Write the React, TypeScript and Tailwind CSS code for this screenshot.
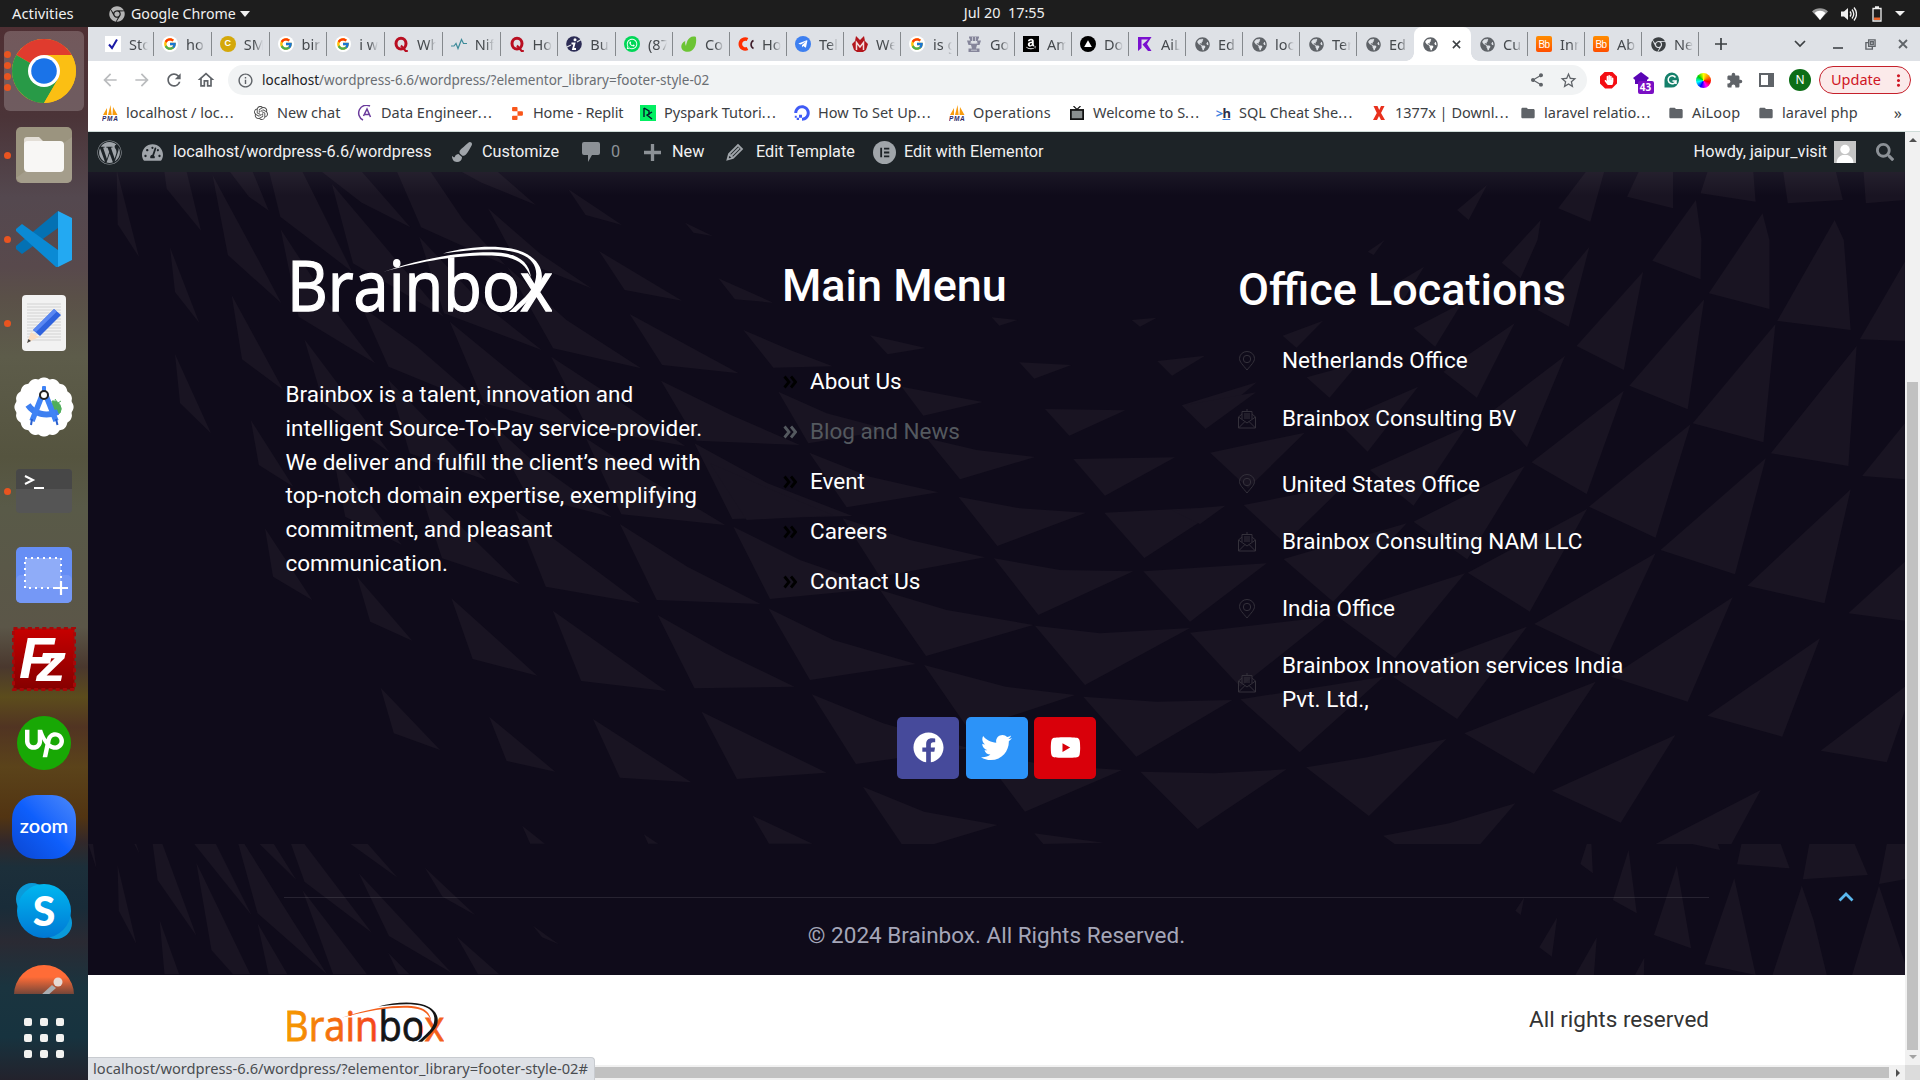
import React from "react";
import {
  FaAmazon,
  FaChrome,
  FaDigitalOcean,
  FaFacebook,
  FaGlobeAmericas,
  FaHandPaper,
  FaPaintBrush,
  FaSearch,
  FaTachometerAlt,
  FaTelegramPlane,
  FaTwitter,
  FaWhatsapp,
  FaWordpress,
  FaYoutube,
} from "react-icons/fa";
import { FcGoogle } from "react-icons/fc";
import {
  MdArrowBack,
  MdArrowForward,
  MdExtension,
  MdFolder,
  MdInfoOutline,
  MdMoreVert,
  MdOutlineHome,
  MdRefresh,
  MdShare,
  MdStarBorder,
} from "react-icons/md";
import { SiOpenai, SiReplit, SiUpwork } from "react-icons/si";

const UI = "font-['Noto_Sans',sans-serif]";

/* ---------- favicons ---------- */

function Google() {
  return (
    <span className="flex size-4 items-center justify-center rounded-full bg-white">
      <FcGoogle size={14} />
    </span>
  );
}
function Quora() {
  return (
    <svg viewBox="0 0 16 16" className="size-4">
      <ellipse cx="8" cy="7.600" rx="5" ry="5.400" fill="none" stroke="#b90f22" strokeWidth="3" />
      <path d="M8 9.500l4.600 5.500h2.200" fill="none" stroke="#b90f22" strokeWidth="2" />
    </svg>
  );
}
function Globe() {
  return <FaGlobeAmericas size={15} color="#5f6368" />;
}
function Bb() {
  return (
    <span className="flex size-4 items-center justify-center rounded-[2px] bg-gradient-to-b from-[#ff8c00] to-[#ff4d00] font-['Liberation_Sans',sans-serif] text-[10px] tracking-tighter text-white">
      Bb
    </span>
  );
}
function Pma() {
  return (
    <svg viewBox="0 0 16 16" className="size-4">
      <path d="M1 10L5 3v7zM6 10L8.500 0l1.200 10zM10.500 10L11 2l4.500 8z" fill="#f89c0e" />
      <text x="0" y="15.500" fontSize="6.500" fontWeight="700" fontStyle="italic" fill="#2d2a66" fontFamily="Liberation Sans, sans-serif" textLength="16">
        PMA
      </text>
    </svg>
  );
}

const check = (
  <svg viewBox="0 0 16 16" className="size-4">
    <rect width="16" height="16" fill="#fff" />
    <path d="M4 8.500l3 3.500 5-8.500" fill="none" stroke="#1a1aa6" strokeWidth="2" />
  </svg>
);
const coin = (
  <span className="flex size-4 items-center justify-center rounded-full bg-[#d4a80a] font-['Liberation_Sans',sans-serif] text-[9px] font-bold text-white">C</span>
);
const nifty = (
  <svg viewBox="0 0 16 16" className="size-4">
    <path d="M0 10h3l2-2.500 2 5 3.500-9 2 4h3.500" fill="none" stroke="#3c8a99" strokeWidth="1.200" />
  </svg>
);
const infinityI = (
  <svg viewBox="0 0 16 16" className="size-4">
    <circle cx="8" cy="8" r="7.800" fill="#2c2c55" />
    <circle cx="9" cy="3.800" r="1.500" fill="#fff" />
    <path d="M5.500 7.500h3L7 13h3" fill="none" stroke="#fff" strokeWidth="1.800" />
    <path d="M0 11.500l5-2.500M11 6l5-3" stroke="#dee1e6" strokeWidth="1.200" />
  </svg>
);
const whatsapp = (
  <span className="flex size-4 items-center justify-center rounded-full bg-[#00d757] text-white">
    <FaWhatsapp size={12} />
  </span>
);
const envato = (
  <svg viewBox="0 0 16 16" className="size-4">
    <path d="M13.500.5C10 0 8 2 6.500 4.500 6 6 5 8.500 5 10 4 8 4 6.500 4.300 5 1.500 6 .3 8.500.3 10.500.3 14 3.500 16 7 15.800 13 15.500 16 9 15 1.500c-.2-.8-.7-1-1.500-1z" fill="#6cc434" />
  </svg>
);
const cc = (
  <svg viewBox="0 0 16 16" className="size-4">
    <path d="M9.500 3.500a5 5 0 1 0 0 9" fill="none" stroke="#ff2e00" strokeWidth="3.600" />
    <path d="M15.500 4.500a4.500 4.500 0 0 0 0 8" fill="none" stroke="#3c1a28" strokeWidth="1.600" />
  </svg>
);
const telegram = (
  <span className="flex size-4 items-center justify-center rounded-full bg-[#3d7ff0] text-white">
    <FaTelegramPlane size={10} />
  </span>
);
const mIcon = (
  <svg viewBox="0 0 16 16" className="size-4">
    <path d="M4 0l4 4 4-4 1 5 3 3-2 6-3 2H5l-3-2-2-6 3-3z" fill="#b3161c" />
    <path d="M4.500 14V6.500L8 11l3.500-4.500V14" fill="none" stroke="#f3dede" strokeWidth="1.500" />
  </svg>
);
const emblem = (
  <svg viewBox="0 0 16 16" className="size-4">
    <path d="M3 .5h10v1L11.500 5h-7L3 1.500zM1 4.500h3.500l1 3h5l1-3H15L13.500 9h-11zM5 9h6l-1 3.500h3.500V16h-11v-3.500H6z" fill="#85859a" />
    <path d="M6.500 1v4M9.500 1v4M4 7h8M5 14.200h6" stroke="#dee1e6" strokeWidth=".7" />
  </svg>
);
const amazon = (
  <span className="flex size-4 items-center justify-center bg-black text-white">
    <FaAmazon size={12} />
  </span>
);
const triangle = (
  <svg viewBox="0 0 16 16" className="size-4">
    <circle cx="8" cy="8" r="8" fill="#000" />
    <path d="M8 4.300l3.800 6.700H4.200z" fill="#fff" />
  </svg>
);
const ailoop = (
  <svg viewBox="0 0 16 16" className="size-4">
    <path d="M1 1h13.500L10 8l4.500 7H11L5.500 8.500 11 3.500H4.500V12L1 15z" fill="#7a10cf" />
  </svg>
);
const chromeGrey = <FaChrome size={15} color="#3c4043" />;

type Tab = { icon: React.ReactNode; label: string; active?: boolean };
const tabs: Tab[] = [
  { icon: check, label: "Sto" },
  { icon: <Google />, label: "ho" },
  { icon: coin, label: "SM" },
  { icon: <Google />, label: "bir" },
  { icon: <Google />, label: "i w" },
  { icon: <Quora />, label: "Wh" },
  { icon: nifty, label: "Nif" },
  { icon: <Quora />, label: "Ho" },
  { icon: infinityI, label: "Bu" },
  { icon: whatsapp, label: "(87" },
  { icon: envato, label: "Co" },
  { icon: cc, label: "Ho" },
  { icon: telegram, label: "Tel" },
  { icon: mIcon, label: "We" },
  { icon: <Google />, label: "is g" },
  { icon: emblem, label: "Go" },
  { icon: amazon, label: "Am" },
  { icon: triangle, label: "Do" },
  { icon: ailoop, label: "AiL" },
  { icon: <Globe />, label: "Ed" },
  { icon: <Globe />, label: "loc" },
  { icon: <Globe />, label: "Ter" },
  { icon: <Globe />, label: "Ed" },
  { icon: <Globe />, label: "", active: true },
  { icon: <Globe />, label: "Cu" },
  { icon: <Bb />, label: "Inn" },
  { icon: <Bb />, label: "Ab" },
  { icon: chromeGrey, label: "Ne" },
];

function TabStrip() {
  return (
    <div className="flex h-[34px] items-end bg-[#dee1e6] pl-[9px] text-[#45494d]">
      {tabs.map((t, i) => {
        const divider = !t.active && !tabs[i + 1]?.active;
        const wide = i > 0 && i < 9;
        return t.active ? (
          <div key={i} className="relative flex h-[34px] w-[57px] shrink-0 items-center rounded-t-lg bg-white pl-[9px]">
            <span className="absolute -left-2 bottom-0 size-2 bg-[radial-gradient(circle_at_0_0,transparent_7.5px,#fff_8px)]" />
            <span className="absolute -right-2 bottom-0 size-2 bg-[radial-gradient(circle_at_100%_0,transparent_7.5px,#fff_8px)]" />
            {t.icon}
            <svg viewBox="0 0 10 10" className="ml-[14px] size-[9px]">
              <path d="M1 1l8 8M9 1l-8 8" stroke="#3c4043" strokeWidth="1.700" />
            </svg>
          </div>
        ) : (
          <div key={i} className={`flex h-[34px] shrink-0 items-center ${wide ? "w-[57.750px]" : "w-[57px]"}`}>
            <div className="flex w-full items-center pl-[8px]">
              <span className="flex w-4 shrink-0 items-center justify-center">{t.icon}</span>
              <span className="-mt-px ml-[8px] w-[19px] overflow-hidden whitespace-nowrap text-[14.500px] leading-5 [mask-image:linear-gradient(to_right,#000_55%,transparent)]">{t.label}</span>
            </div>
            <span className={divider ? "h-6 w-px shrink-0 bg-[#85898d]" : "h-6 w-px shrink-0"} />
          </div>
        );
      })}
      <div className="flex h-[34px] flex-1 items-center pl-[16px] text-[#45494d]">
        <svg viewBox="0 0 12 12" className="size-3">
          <path d="M6 0v12M0 6h12" stroke="#3c4043" strokeWidth="1.700" />
        </svg>
        <svg viewBox="0 0 12 8" className="ml-[67px] h-[8px] w-3">
          <path d="M1 1l5 5 5-5" fill="none" stroke="#3c4043" strokeWidth="1.700" />
        </svg>
        <span className="mt-2 ml-[27px] h-[2px] w-[10px] bg-[#5f6368]" />
        <svg viewBox="0 0 12 12" className="ml-[22px] size-[11px]">
          <path d="M4 1h7v7H4zM4 4H1v7h7V8M6 3h3v3H6z" fill="none" stroke="#5f6368" strokeWidth="1.500" />
        </svg>
        <svg viewBox="0 0 10 10" className="ml-[22px] size-[10px]">
          <path d="M1 1l8 8M9 1l-8 8" stroke="#5f6368" strokeWidth="1.800" />
        </svg>
      </div>
    </div>
  );
}

function Toolbar() {
  return (
    <div className="flex h-[38px] items-center bg-white pl-[12px] text-[#5f6368]">
      <div className="flex w-[128px] items-center gap-[12px]">
        <MdArrowBack size={20} color="#babcbe" />
        <MdArrowForward size={20} color="#babcbe" />
        <MdRefresh size={20} />
        <MdOutlineHome size={20} />
      </div>
      <div className="flex h-[30px] w-[1359px] items-center rounded-full bg-[#f1f3f4] pl-[9px] pr-[9px]">
        <MdInfoOutline size={17} />
        <div className={`${UI} ml-[8px] flex-1 text-[13.500px] text-[#6a6e73]`}>
          <span className="text-[#202124]">localhost</span>/wordpress-6.6/wordpress/?elementor_library=footer-style-02
        </div>
        <MdShare size={16} />
        <MdStarBorder size={19} className="ml-[14px]" />
      </div>
      <div className="ml-[13px] flex items-center gap-[15.500px]">
        <span className="flex size-[17px] items-center justify-center bg-[#f40d12] text-white [clip-path:polygon(30%_0,70%_0,100%_30%,100%_70%,70%_100%,30%_100%,0_70%,0_30%)]">
          <FaHandPaper size={10} />
        </span>
        <span className="relative size-4">
          <svg viewBox="0 0 16 16" className="size-4">
            <path d="M8 0l8 6-2 2v4H2V8L0 6z" fill="#5a05b5" />
          </svg>
          <span className="absolute left-[5px] top-[9px] flex h-[13px] w-[16px] items-center justify-center rounded-[2px] bg-[#7a0fc4] font-['Noto_Sans',sans-serif] text-[10px] font-bold text-white">43</span>
        </span>
        <svg viewBox="0 0 16 16" className="size-4">
          <path d="M8 .5a7.500 7.500 0 1 1-1 15H.5V8A7.500 7.500 0 0 1 8 .5z" fill="#15806b" />
          <path d="M11.500 5.500A4 4 0 1 0 12 9H8.500M12 8.500V12" fill="none" stroke="#fff" strokeWidth="1.500" />
        </svg>
        <span className="size-[15px] rounded-full bg-[conic-gradient(#ff0,#f80,#f00,#f0f,#00f,#0ff,#0c0,#ff0)]" />
        <MdExtension size={17} />
        <span className="h-[14px] w-[15px] border-2 border-r-[6px] border-[#5f6368]" />
        <span className={`${UI} flex size-[22px] items-center justify-center rounded-full bg-[#0d6e17] text-[12px] text-white`}>N</span>
      </div>
      <div className={`${UI} ml-[8px] flex h-[28px] w-[92px] items-center rounded-full border border-[#c5202b] bg-[#fbeaea] pl-[11px] text-[14.500px] text-[#cf1624]`}>
        Update
        <MdMoreVert size={19} className="ml-[8px]" />
      </div>
    </div>
  );
}

const bookmarks: { icon: React.ReactNode; label: string; cut?: boolean; cell: string }[] = [
  { icon: <Pma />, label: "localhost / loc", cut: true, cell: "w-[151px]" },
  { icon: <SiOpenai size={14} color="#4a4a4a" />, label: "New chat", cell: "w-[104px]" },
  {
    icon: (
      <svg viewBox="0 0 16 16" className="size-4">
        <path d="M13 1A7.500 7.500 0 0 0 6 15M6.500 11l3.500-7 3.500 8M7.500 9.500h5" fill="none" stroke="#6a3a9c" strokeWidth="1.500" />
      </svg>
    ),
    label: "Data Engineer",
    cut: true,
    cell: "w-[152px]",
  },
  { icon: <SiReplit size={13} color="#f9561a" />, label: "Home - Replit", cell: "w-[131px] tracking-[-0.15px]" },
  {
    icon: (
      <svg viewBox="0 0 16 16" className="size-4">
        <rect width="16" height="16" fill="#03ef62" />
        <path d="M4 3v9M4 3l5 3v4M12 7l-5 3 5 4" fill="none" stroke="#05192d" strokeWidth="1.400" />
      </svg>
    ),
    label: "Pyspark Tutori",
    cut: true,
    cell: "w-[154px]",
  },
  { icon: <FaDigitalOcean size={16} color="#3f5bf6" />, label: "How To Set Up", cut: true, cell: "w-[155px]" },
  { icon: <Pma />, label: "Operations", cell: "w-[120px] tracking-[0.2px]" },
  {
    icon: (
      <svg viewBox="0 0 16 16" className="size-[14px]">
        <path d="M4 0l4 4 4-4" fill="none" stroke="#111" strokeWidth="1.300" />
        <rect x="1" y="4.500" width="14" height="10.500" fill="#8a8f8f" stroke="#111" strokeWidth="2" />
      </svg>
    ),
    label: "Welcome to S",
    cut: true,
    cell: "w-[146px]",
  },
  {
    icon: <span className="text-[13px] font-bold leading-4 tracking-tighter text-[#2b2f4a]"><span className="text-[#3f7fe0]">&gt;</span><span className="underline decoration-[#3f7fe0]">h</span></span>,
    label: "SQL Cheat She",
    cut: true,
    cell: "w-[156px]",
  },
  {
    icon: (
      <svg viewBox="0 0 16 16" className="size-4">
        <path d="M2.500 1h4l1.700 4L10 1h3.500L10 8l4 7H10L8 11l-2 4H2l3.800-7z" fill="#e8301c" />
      </svg>
    ),
    label: "1377x | Downl",
    cut: true,
    cell: "w-[149px]",
  },
  { icon: <MdFolder size={18} color="#5f6368" />, label: "laravel relatio", cut: true, cell: "w-[148px]" },
  { icon: <MdFolder size={18} color="#5f6368" />, label: "AiLoop", cell: "w-[90px] tracking-[0.2px]" },
  { icon: <MdFolder size={18} color="#5f6368" />, label: "laravel php", cell: "w-[112px]" },
];

function Bookmarks() {
  return (
    <div className={`${UI} flex h-[33px] items-center border-b border-[#cfdcd8] bg-white pb-1 pl-[14px] text-[14.500px] text-[#3c4043]`}>
      {bookmarks.map((b, i) => (
        <div key={i} className={`flex shrink-0 items-center whitespace-nowrap ${b.cell}`}>
          <span className="mr-[8px] flex w-4 shrink-0 justify-center">{b.icon}</span>
          {b.label}
          {b.cut && <span className="tracking-[1.200px]">...</span>}
        </div>
      ))}
      <span className="ml-auto pr-[18px] text-[16px]">»</span>
    </div>
  );
}

function AdminBar() {
  return (
    <div className="flex h-[40px] items-center bg-[#1d2327] pl-[9px] text-[16.250px] text-[#f0f0f1]">
      <FaWordpress size={25} color="#a0a5aa" className="shrink-0" />
      <FaTachometerAlt size={21} color="#a0a5aa" className="ml-[20px] shrink-0" />
      <span className="ml-[10px] w-[279px]">localhost/wordpress-6.6/wordpress</span>
      <FaPaintBrush size={20} color="#a0a5aa" className="shrink-0" />
      <span className="ml-[10px] w-[100px]">Customize</span>
      <svg viewBox="0 0 18 20" className="h-[20px] w-[18px]">
        <path d="M2 0h14a2 2 0 0 1 2 2v9a2 2 0 0 1-2 2h-6l-4 7v-7H2a2 2 0 0 1-2-2V2a2 2 0 0 1 2-2z" fill="#8c9196" />
      </svg>
      <span className="ml-[11px] w-[33px] text-[#8c9196]">0</span>
      <svg viewBox="0 0 18 18" className="size-[17px] shrink-0">
        <path d="M9 0v18M0 9h18" stroke="#8c9196" strokeWidth="3.500" />
      </svg>
      <span className="ml-[11px] w-[54px]">New</span>
      <svg viewBox="0 0 18 18" className="size-[18px] shrink-0">
        <path d="M1.500 16.500L3 11 12 2l4 4-9 9zM5 13l8-8M3 11l4 4" fill="none" stroke="#a0a5aa" strokeWidth="1.800" />
      </svg>
      <span className="ml-[12px] w-[117px]">Edit Template</span>
      <svg viewBox="0 0 24 24" className="size-[23px] shrink-0">
        <circle cx="12" cy="12" r="12" fill="#a0a5aa" />
        <path d="M8.500 7v10M11.500 8h5.500M11.500 12h5.500M11.500 16h5.500" stroke="#1d2327" strokeWidth="1.900" />
      </svg>
      <span className="ml-[8px]">Edit with Elementor</span>
      <span className="ml-auto">Howdy, jaipur_visit</span>
      <svg viewBox="0 0 22 22" className="ml-[7px] size-[22px]">
        <rect width="22" height="22" fill="#c5c5c5" />
        <circle cx="11" cy="8.500" r="4.700" fill="#fff" />
        <path d="M2.500 22c.5-5 3-7 6-8h5c3 1 5.500 3 6 8z" fill="#fff" />
      </svg>
      <FaSearch size={18} color="#8c9196" className="ml-[20px] mr-[11px]" />
    </div>
  );
}

/* ---------- faceted footer backdrop ---------- */

type Patch = { x: number; y: number; sx: number; shapes: string[] };
const third = 1 / 3;
const upper: Patch[] = [
  { x: 0, y: 20, sx: third, shapes: ["350,435 353,593 417,688", "490,420 500,490 603,612 555,420", "510,660 525,790 598,880", "525,970 540,1112 633,1200"] },
  {
    x: 180, y: 170, sx: 0.38265,
    shapes: [
      "85,15 125,255 265,400 205,270", "130,5 180,80 232,122 190,5", "233,5 262,140 450,305 320,5", "370,5 475,98 602,172 475,5",
      "397,42 452,280 690,440 550,250", "567,5 630,172 850,285 740,150 655,5", "735,5 788,38 930,105 830,5", "1015,58 1060,135 1155,165",
      "1320,158 1342,188 1392,198", "805,115 875,265 1075,355 940,250", "1095,243 1162,360 1312,392", "1407,325 1450,388 1550,398",
      "263,178 310,440 510,580 390,400", "625,200 690,430 945,540 780,390", "855,290 975,535 1205,595 1010,450", "1175,432 1260,585 1460,610",
      "135,375 162,568 270,660", "325,508 375,700 548,848", "475,410 545,590 800,710 620,530", "705,455 795,700 1055,780 880,620",
      "970,560 1065,775 1320,828 1130,680", "1257,632 1350,812 1620,825 1440,735", "545,630 600,850 800,930",
    ],
  },
  {
    x: 88, y: 420, sx: 0.47194,
    shapes: [
      "345,0 362,135 435,200", "375,325 392,470 475,540", "520,110 545,290 665,375", "570,470 598,605 687,662",
      "700,195 750,415 915,492", "770,535 815,717 952,767", "905,270 970,500 1170,550", "840,-10 930,225 1110,292 940,120",
      "985,572 1045,783 1225,813", "1055,55 1130,283 1350,315 1180,170", "1127,312 1205,540 1425,552 1270,440", "1285,70 1365,297 1620,288 1440,190",
      "1207,585 1285,805 1497,800 1350,700", "1300,875 1375,1077 1565,1058", "1070,897 1127,1073 1278,1087", "850,890 887,1023 990,1055",
      "620,803 648,940 746,990", "920,1217 937,1271 968,1271", "1178,1243 1187,1271 1208,1271", "1408,1187 1443,1271 1535,1271",
    ],
  },
  {
    x: 760, y: 230, sx: third,
    shapes: [
      "695,262 718,287 772,270", "1115,270 1140,290 1190,263", "330,316 383,373 497,354", "778,397 823,446 934,405",
      "1192,393 1236,437 1335,377", "-50,300 40,413 218,409 90,360", "425,470 490,557 668,516", "855,537 928,617 1096,541",
      "1265,526 1330,590 1490,457", "55,485 145,640 390,600 200,550", "500,625 600,748 825,681 650,660", "940,687 1035,797 1245,682",
      "148,668 260,832 535,787 330,740", "595,800 712,948 978,848 780,835", "1033,848 1153,984 1390,830", "-150,700 -40,870 220,856 60,790",
      "248,865 360,1040 675,982 450,930", "702,985 835,1155 1120,1024 900,1020", "1150,1024 1290,1175 1520,1000", "-80,890 30,1107 365,1075 120,990",
      "360,1080 498,1278 820,1185 560,1140", "825,1187 975,1365 1290,1194 1020,1210", "25,1135 150,1350 468,1302 220,1230",
    ],
  },
  {
    x: 720, y: 640, sx: 0.40816,
    shapes: [
      "225,163 333,372 610,325 400,250", "500,75 610,270 870,165 700,140", "890,170 1020,350 1255,180 1070,185", "350,440 445,612 525,612 680,555 500,515",
      "640,340 747,515 985,390 800,375", "770,580 792,612 940,608", "1030,395 1170,567 1388,388 1210,400",
    ],
  },
  {
    x: 1200, y: 240, sx: 0.4592,
    shapes: [
      "365,35 378,45 402,0", "657,68 698,115 735,0 742,-60", "985,62 1090,118 1092,0 1080,-120", "1108,160 1240,207 1240,0 1225,-80",
      "1257,243 1417,270 1402,0 1382,-60", "1437,298 1535,303 1535,65", "180,287 210,323 268,242", "465,265 512,320 570,190",
      "415,140 442,182 488,80", "735,210 803,260 848,20", "820,318 923,390 965,95", "935,437 1062,508 1098,178", "1073,550 1227,607 1253,253",
      "1243,640 1412,678 1430,318", "1442,708 1535,718 1535,550", "232,412 282,473 345,370", "530,395 603,473 685,250", "640,510 712,622 795,347",
      "722,667 842,762 923,452", "847,800 992,893 1068,553", "1003,930 1165,1003 1232,655", "1192,1037 1360,1090 1417,748", "1412,1120 1535,1142 1535,965",
      "300,545 365,635 475,440", "370,690 465,797 580,560", "465,845 582,958 707,678", "583,998 718,1115 843,807", "728,1152 885,1255 992,940",
      "895,1310 1062,1385 1160,1072", "1105,1427 1268,1490 1350,1195", "-30,495 12,567 122,457", "22,638 105,745 228,578", "95,795 185,910 315,735",
      "-60,812 0,852 55,797", "182,957 290,1085 450,850", "295,1125 425,1255 577,1000", "-22,1178 88,1341 280,1130", "420,1310 560,1437 712,1160", "88,1378 217,1537 400,1310",
      "560,-90 585,-60 625,-165", "780,-95 850,-55 880,-204 840,-204", "930,-130 1030,-95 1030,-204 955,-204", "1090,-140 1210,-115 1205,-204 1105,-204", "1280,-110 1400,-120 1385,-204 1270,-204", "1450,-110 1535,-120 1535,-204 1445,-204",
    ],
  },
  {
    x: 1360, y: 640, sx: 0.35714,
    shapes: ["292,280 487,402 660,125", "1290,332 1475,367 1526,210 1526,140", "537,452 730,548 883,285", "-151,382 25,528 242,297 20,352", "65,587 97,612 337,612 435,490 250,550", "828,612 1040,612 1122,450"],
  },
];
const lower: Patch[] = [
  {
    x: 80, y: 640, sx: 0.40816,
    shapes: [
      "20,612 40,685 32,612", "133,612 145,640 138,612", "92,675 95,812 138,912", "178,612 190,720 285,887 202,612", "280,612 345,712 420,825 333,612",
      "388,612 435,820 605,1003 520,840 403,612", "285,668 322,930 375,1003 417,1003", "440,612 530,720 475,612", "517,612 550,725 715,878 550,612",
      "663,612 778,713 705,612", "683,700 757,888 910,998", "545,750 620,1003 703,1003", "755,938 780,1003 807,1003", "845,683 888,770 968,825",
      "923,890 975,1003 1027,1003", "1110,857 1132,892 1173,913", "195,840 207,1003 243,1003", "435,850 462,1003 508,1003",
    ],
  },
  {
    x: 1360, y: 640, sx: 0.35714,
    shapes: [
      "930,612 1008,630 1002,612", "617,672 652,700 648,612 635,612", "1056,673 1203,685 1178,612 1068,612", "1240,718 1422,705 1385,612 1258,612",
      "1453,732 1526,718 1526,612 1475,612", "708,780 775,820 752,630", "823,885 927,925 887,677", "965,973 1108,1005 1048,715",
      "1155,1005 1307,1005 1270,840 1237,737", "1378,1005 1526,1005 1526,970 1453,737", "435,812 450,825 460,772", "502,922 537,950 552,832",
      "603,1005 655,1005 663,892", "770,1005 795,1005 796,953",
    ],
  },
];

function Facets({ patches, box }: { patches: Patch[]; box: string }) {
  return (
    <svg viewBox={box} className="absolute inset-0 h-full w-full" fill="#191422">
      {patches.map((p, i) => (
        <g key={i} transform={`translate(${p.x} ${p.y}) scale(${p.sx} ${p.x === 0 ? 0.3444 : third})`}>
          {p.shapes.map((s) => (
            <polygon key={s} points={s} />
          ))}
        </g>
      ))}
    </svg>
  );
}

function Brand({ light, className }: { light?: boolean; className: string }) {
  const word = light ? "#fff" : "url(#brandWarm)";
  const arc = light ? "#fff" : "#151515";
  return (
    <svg viewBox="0 0 260 68" className={className}>
      <defs>
        <linearGradient id="brandWarm" gradientUnits="userSpaceOnUse" x1="0" y1="0" x2="260" y2="0">
          <stop offset="0" stopColor="#f59a00" />
          <stop offset=".57" stopColor="#f4441c" />
          <stop offset=".57" stopColor="#151515" />
          <stop offset=".858" stopColor="#151515" />
          <stop offset=".858" stopColor="#f4601c" />
        </linearGradient>
      </defs>
      <text x="-5" y="65" fontFamily="Open Sans, sans-serif" fontSize="69" fontWeight="400" textLength="266" lengthAdjust="spacingAndGlyphs" fill={word} stroke={word} strokeWidth="1.300">
        Brainbox
      </text>
      <path d="M91 26C140 9 180 5 206 6.500c20 1.500 31 9 33 25C233 17 224 11.500 206 10 180 8 140 12 91 26z" fill={light ? "#fff" : "#f4601c"} />
      <path d="M151 7.500C180-1 212-1 228 5c25 9 27 30 14 43-6 7-12 12-18 18h-7c12-11 23-20 26-30 4-14-2-24-17-29-20-6-50-3-75 .5z" fill={arc} />
    </svg>
  );
}

const menu = ["About Us", "Blog and News", "Event", "Careers", "Contact Us"];
const offices: { text: string; pin: boolean; gap: string }[] = [
  { text: "Netherlands Office", pin: true, gap: "mt-[32px]" },
  { text: "Brainbox Consulting BV", pin: false, gap: "mt-[24px]" },
  { text: "United States Office", pin: true, gap: "mt-[32px]" },
  { text: "Brainbox Consulting NAM LLC", pin: false, gap: "mt-[24px]" },
  { text: "India Office", pin: true, gap: "mt-[33px]" },
  { text: "Brainbox Innovation services India Pvt. Ltd.,", pin: false, gap: "mt-[23.500px]" },
];

function Pin() {
  return (
    <svg viewBox="0 0 18 20" className="h-5 w-[18px] shrink-0" fill="none" stroke="#34313b" strokeWidth="1">
      <path d="M9 19C5 14 1.500 11 1.500 7.500a7.500 7 0 0 1 15 0C16.500 11 13 14 9 19z" />
      <circle cx="9" cy="8" r="3.700" />
    </svg>
  );
}
function Mail() {
  return (
    <svg viewBox="0 0 18 20" className="h-5 w-[18px] shrink-0" fill="none" stroke="#34313b" strokeWidth="1">
      <path d="M.5 8v11h17V8M.5 8L4 5M17.500 8L14 5M.5 8l8.500 6 8.500-6M.5 19L7 12.500M17.500 19L11 12.500M4 10V2.500h10V10M6 5h6M6 7h6M6 9h6M8 1h2" />
    </svg>
  );
}

function Footer() {
  return (
    <>
      <section className="relative h-[672px] bg-[#0f0b1a]">
        <Facets patches={upper} box="88 172 1817 672" />
        <div className="absolute inset-x-0 top-0 h-6 bg-gradient-to-b from-white/5 to-transparent" />
        <div className="relative flex pl-[197.500px] text-[22.500px] leading-[33.750px] text-white">
          <div className="w-[496.500px] pt-[74px]">
            <Brand light className="ml-[6px] h-[68px] w-[260px]" />
            <p className="mt-[64px] w-[425px]">
              Brainbox is a talent, innovation and intelligent Source-To-Pay service-provider. We deliver and fulfill the client’s need with top-notch domain expertise, exemplifying commitment, and pleasant communication.
            </p>
          </div>
          <div className="w-[456px] pt-[91px]">
            <h2 className="text-[45px] font-medium leading-[45px]">Main Menu</h2>
            <ul className="mt-[57px] flex flex-col gap-[16.250px]">
              {menu.map((m) => (
                <li key={m} className={`flex items-center gap-[13px] ${m === "Blog and News" ? "text-[#54595f]" : ""}`}>
                  <svg viewBox="0 0 14 14" className={`ml-px h-[14px] w-[14px] ${m === "Blog and News" ? "text-[#54595f]" : "text-black"}`}>
                    <path d="M1.500 1.500L6 7l-4.500 5.500M8 1.500L12.500 7 8 12.500" fill="none" stroke="currentColor" strokeWidth="2.800" />
                  </svg>
                  {m}
                </li>
              ))}
            </ul>
            <div className="ml-[115px] mt-[118px] flex gap-[6.500px] text-white">
              <span className="flex size-[62px] items-center justify-center rounded-[5px] bg-[#464a9b]">
                <FaFacebook size={31} />
              </span>
              <span className="flex size-[62px] items-center justify-center rounded-[5px] bg-[#2c93f8]">
                <FaTwitter size={31} />
              </span>
              <span className="flex size-[62px] items-center justify-center rounded-[5px] bg-[#d9000a]">
                <FaYoutube size={31} />
              </span>
            </div>
          </div>
          <div className="pt-[95px]">
            <h2 className="text-[45px] font-medium leading-[45px]">Office Locations</h2>
            {offices.map((o) => (
              <div key={o.text} className={`flex items-center gap-[26px] ${o.gap}`}>
                {o.pin ? <Pin /> : <Mail />}
                <span className="w-[370px]">{o.text}</span>
              </div>
            ))}
          </div>
        </div>
      </section>
      <section className="relative h-[131px] bg-[#0f0b1a]">
        <Facets patches={lower} box="88 844 1817 131" />
        <div className="relative px-[196px] pt-[53px]">
          <div className="border-t border-white/10" />
          <p className="mt-[21px] text-center text-[22.500px] leading-[33.750px] text-[#a5a6b8]">© 2024 Brainbox. All Rights Reserved.</p>
        </div>
        <svg viewBox="0 0 16 10" className="absolute left-[1750px] top-[48px] h-[10px] w-4">
          <path d="M1.500 8.500L8 2l6.500 6.500" fill="none" stroke="#5bb8ee" strokeWidth="2.800" />
        </svg>
      </section>
      <section className="relative flex h-[90px] justify-between bg-white pl-[199px] pr-[196px]">
        <Brand className="mt-[27px] h-[41px] w-[157px]" />
        <p className="mt-[28px] text-[22.500px] leading-[33.750px] text-[#333]">All rights reserved</p>
      </section>
    </>
  );
}

/* ---------- dock ---------- */

function Slot({ dots = 0, active, children }: { dots?: number; active?: boolean; children: React.ReactNode }) {
  return (
    <div className="relative flex h-[84px] shrink-0 items-center justify-center">
      {active && <span className="absolute inset-x-1 inset-y-[2px] rounded-md bg-white/20" />}
      <span className="absolute inset-y-0 left-[4px] flex flex-col justify-center gap-[4px]">
        {Array.from({ length: dots }, (_, i) => (
          <span key={i} className="size-[7px] rounded-full bg-[#e95420]" />
        ))}
      </span>
      <span className="relative">{children}</span>
    </div>
  );
}

function scallop(n: number, r: number, d: number) {
  const pts: string[] = [];
  for (let i = 0; i < 180; i++) {
    const t = (i / 180) * Math.PI * 2;
    const k = r + d * Math.abs(Math.cos((t * n) / 2));
    pts.push(`${(30 + k * Math.cos(t)).toFixed(1)},${(30 + k * Math.sin(t)).toFixed(1)}`);
  }
  return pts.join(" ");
}

function Dock() {
  return (
    <aside className="flex w-[88px] shrink-0 flex-col bg-[linear-gradient(to_bottom,#4f2f33_0px,#4b3438_90px,#54484f_170px,#58494c_240px,#5a5048_270px,#5d5c4a_330px,#55543f_430px,#595a48_480px,#5b5648_600px,#4a382e_640px,#5c4c1c_670px,#513422_700px,#5b431a_740px,#523412_790px,#32282a_815px,#1c2f3a_840px,#192c39_880px,#2a2a33_915px,#1a343f_960px,#17333f_1010px,#23222c_1053px)] pt-[2px]">
      <div className="flex h-[965px] flex-col overflow-hidden">
        <Slot dots={4} active>
          <svg viewBox="0 0 64 64" className="size-16">
            <circle cx="32" cy="32" r="32" fill="#fbbf13" />
            <path d="M32 32L4.300 16A32 32 0 0 1 59.700 16z" fill="#e03b2e" />
            <path d="M32 32L4.300 16A32 32 0 0 0 32 64l14-24z" fill="#289a47" />
            <path d="M32 16h27.700A32 32 0 0 1 32 64l14-24z" fill="#fbbf13" />
            <circle cx="32" cy="32" r="16" fill="#fff" />
            <circle cx="32" cy="32" r="12.800" fill="#1a73e8" />
          </svg>
        </Slot>
        <Slot dots={1}>
          <svg viewBox="0 0 56 56" className="size-14">
            <rect width="56" height="56" rx="5" fill="#9b947f" />
            <path d="M56 10v41a5 5 0 0 1-5 5H5L0 51z" fill="#aaa492" opacity=".6" />
            <path d="M8 13a3 3 0 0 1 3-3h12l5 5h17v12H8z" fill="#e3ded6" />
            <rect x="8" y="14" width="40" height="31" rx="4" fill="#f8f7f5" />
          </svg>
        </Slot>
        <Slot dots={1}>
          <svg viewBox="0 0 56 56" className="size-14">
            <path d="M42 0v17L6 43l-6-5v-3z" fill="#0471b3" />
            <path d="M0 18l6-5 36 26v17h-2L0 20z" fill="#0a8ad4" />
            <path d="M42 0l14 7v42l-14 7z" fill="#23a9f2" />
          </svg>
        </Slot>
        <Slot dots={1}>
          <svg viewBox="0 0 44 56" className="h-14 w-11">
            <rect width="44" height="56" rx="4" fill="#f2f2f2" />
            <path d="M5 9h34M5 12h34M5 15h34M5 18h34M5 21h34M5 24h34M5 27h34M5 30h34M5 33h34M5 36h34M5 39h34M5 42h34M5 45h34" stroke="#d2d2d2" />
            <path d="M5 48l4-11 8 5z" fill="#fbdcc0" />
            <path d="M5 48l1.500-4 2.500 2z" fill="#444" />
            <path d="M11 35L32 14l7 6-21 21z" fill="#2f62dd" />
            <path d="M11 35L32 14l3 2.500L14 37z" fill="#5a87f2" />
          </svg>
        </Slot>
        <Slot>
          <svg viewBox="0 0 60 60" className="size-[60px]">
            <polygon points={scallop(16, 28, 1.6)} fill="#fff" />
            <path d="M38 24a8 8 0 0 1 8 12l-6 2zM41 22l2 3M47 24l-3 2" fill="#4fae5a" stroke="#4fae5a" />
            <path d="M14 28c6 9 18 12 30 7" fill="none" stroke="#3d7ff0" strokeWidth="6" />
            <path d="M29 16L18 44M31 16l11 28" stroke="#3f83f5" strokeWidth="5.500" />
            <path d="M18 42l-1 6M42 42l1.500 6" stroke="#2a5fce" strokeWidth="2" />
            <rect x="28" y="9" width="4" height="6" rx="1" fill="#3f83f5" />
            <circle cx="30" cy="18" r="4" fill="#fff" stroke="#222" strokeWidth="2" />
          </svg>
        </Slot>
        <Slot dots={1}>
          <svg viewBox="0 0 56 44" className="h-11 w-14">
            <rect width="56" height="44" rx="4" fill="#555" />
            <path d="M0 20V4a4 4 0 0 1 4-4h48a4 4 0 0 1 4 4v16z" fill="#474747" />
            <path d="M9 7l8 4-8 4M18 19h10" fill="none" stroke="#fff" strokeWidth="2" />
          </svg>
        </Slot>
        <Slot>
          <svg viewBox="0 0 56 56" className="size-14">
            <rect width="56" height="56" rx="5" fill="#668ef5" />
            <rect y="28" width="56" height="28" rx="5" fill="#7598f6" />
            <rect x="9" y="11" width="36" height="30" fill="#8facf8" stroke="#fff" strokeWidth="2" strokeDasharray="2 4" />
            <path d="M45 34v14M38 41h14" stroke="#fff" strokeWidth="2.200" />
          </svg>
        </Slot>
        <Slot>
          <svg viewBox="0 0 64 64" className="size-16">
            <defs>
              <linearGradient id="stamp" x2="0" y2="1">
                <stop offset="0" stopColor="#c60000" />
                <stop offset="1" stopColor="#860000" />
              </linearGradient>
            </defs>
            <rect x="1.500" y="1.500" width="61" height="61" fill="url(#stamp)" stroke="#a60808" strokeWidth="3" strokeDasharray="4 3.200" />
            <g fontFamily="Liberation Sans, sans-serif" fontWeight="700" fontStyle="italic" fill="#fff">
              <text x="7" y="51" fontSize="58">F</text>
              <text x="24" y="54" fontSize="53" textLength="30" lengthAdjust="spacingAndGlyphs">z</text>
            </g>
          </svg>
        </Slot>
        <Slot>
          <span className="flex size-[54px] items-center justify-center rounded-full bg-[#18a805] text-white">
            <SiUpwork size={39} />
          </span>
        </Slot>
        <Slot>
          <span className="flex size-16 items-center justify-center rounded-[24px] bg-gradient-to-tr from-[#0b46d0] via-[#0e5ffc] to-[#4b88fa] font-['Lato'] text-[20px] font-semibold leading-none text-white">
            <span className="-mt-1">zoom</span>
          </span>
        </Slot>
        <Slot>
          <svg viewBox="0 0 56 56" className="size-14">
            <defs>
              <linearGradient id="sky" x2="0" y2="1">
                <stop offset="0" stopColor="#00b7f0" />
                <stop offset="1" stopColor="#0078d4" />
              </linearGradient>
            </defs>
            <circle cx="16" cy="16" r="16" fill="#0a9ad9" />
            <circle cx="40" cy="40" r="16" fill="#0a9ad9" />
            <circle cx="28" cy="28" r="27" fill="url(#sky)" />
            <text x="28" y="43" textAnchor="middle" fontFamily="Lato, sans-serif" fontWeight="900" fontSize="41" fill="#fff">S</text>
          </svg>
        </Slot>
        <Slot>
          <svg viewBox="0 0 60 60" className="size-[60px]">
            <defs>
              <linearGradient id="post" x2="0" y2="1">
                <stop offset=".2" stopColor="#ff6c37" />
                <stop offset=".5" stopColor="#6d4439" />
              </linearGradient>
            </defs>
            <circle cx="30" cy="30" r="30" fill="url(#post)" />
            <circle cx="44" cy="17" r="4.500" fill="#e6d9d4" />
            <path d="M26 31l12-11 4 3-9 8z" fill="#a9aeb2" />
          </svg>
        </Slot>
      </div>
      <div className="ml-[24px] mt-[24px] grid w-10 grid-cols-3 gap-2">
        {Array.from({ length: 9 }, (_, i) => (
          <span key={i} className="size-2 rounded-[2px] bg-[#f2f2f0]" />
        ))}
      </div>
    </aside>
  );
}

function TopBar() {
  return (
    <header className={`${UI} relative flex h-[27px] shrink-0 items-center bg-[#1d1d1d] text-[14.200px] text-[#f0f0f0]`}>
      <span className="ml-[12px] w-[97px] text-[14.800px]">Activities</span>
      <FaChrome size={16} color="#b5b5b5" />
      <span className="ml-[6px]">Google Chrome</span>
      <span className="ml-[4px] border-x-[5px] border-t-[6px] border-x-transparent border-t-[#f0f0f0]" />
      <span className="ml-[714px] -mt-px whitespace-pre text-[14.400px]">Jul 20  17:55</span>
      <div className="ml-auto flex items-center pr-[15px]">
        <svg viewBox="0 0 16 13" className="h-[13px] w-4">
          <path d="M0 4.500a11.500 11.500 0 0 1 16 0L8 13z" fill="#999" />
          <path d="M2.500 6a8 8 0 0 1 11 0L8 13z" fill="#fff" />
        </svg>
        <svg viewBox="0 0 16 16" className="ml-[13px] size-4" fill="none" stroke="#f0f0f0" strokeWidth="1.300">
          <path d="M0 5.500h3L7 2v12l-4-3.500H0z" fill="#f0f0f0" stroke="none" />
          <path d="M9 5.500q2 2.500 0 5M11 3.500q3.500 4.500 0 9M13 1.500q5 6.500 0 13" />
        </svg>
        <svg viewBox="0 0 10 16" className="ml-[15px] h-4 w-[10px]">
          <path d="M1 2.500h8v12.500H1zM3 1h4" fill="none" stroke="#f0f0f0" strokeWidth="1.300" />
          <rect x="2" y="11.500" width="6" height="2.500" fill="#e9642a" />
        </svg>
        <span className="ml-[13px] border-x-[5px] border-t-[5px] border-x-transparent border-t-[#f0f0f0]" />
      </div>
    </header>
  );
}

export default function App() {
  return (
    <div className="flex h-[1080px] w-[1920px] flex-col overflow-hidden bg-white font-['Roboto',sans-serif]">
      <TopBar />
      <div className="flex min-h-0 flex-1">
        <Dock />
        <main className="relative flex min-w-0 flex-1 flex-col">
          <div className={UI}>
            <TabStrip />
          </div>
          <Toolbar />
          <Bookmarks />
          <div className="flex min-h-0 flex-1">
            <div className="flex w-[1817px] flex-col">
              <AdminBar />
              <Footer />
              <div className="flex h-[15px] items-center bg-[#f1f1f1]">
                <div className="h-[11px] w-[1801px] bg-[#c1c1c1]" />
                <span className="ml-[7px] border-y-[4px] border-l-[4px] border-y-transparent border-l-[#505050]" />
              </div>
            </div>
            <div className="flex w-[15px] flex-col items-center bg-[#f1f1f1]">
              <span className="mt-[6px] border-x-[4px] border-b-[4px] border-x-transparent border-b-[#505050]" />
              <div className="mt-[240px] h-[668px] w-[11px] bg-[#c1c1c1]" />
              <span className="mt-[5px] border-x-[4px] border-t-[4px] border-x-transparent border-t-[#a3a3a3]" />
              <div className="mt-auto h-[15px] w-full bg-[#dcdcdc]" />
            </div>
          </div>
          <div className={`${UI} absolute bottom-0 left-0 h-[23px] w-[507px] rounded-tr-[4px] border-r border-t border-[#c8cbd0] bg-[#dee1e6] pl-[5px] text-[14.660px] leading-[20px] text-[#4a4d51]`}>
            localhost/wordpress-6.6/wordpress/?elementor_library=footer-style-02#
          </div>
        </main>
      </div>
    </div>
  );
}
